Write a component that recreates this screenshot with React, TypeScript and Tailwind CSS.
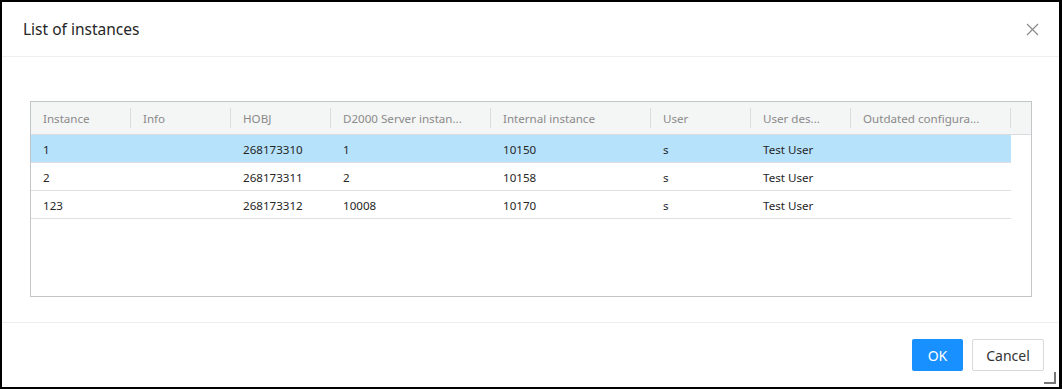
import React from "react";

const cols = [
  { name: "Instance", w: 100 },
  { name: "Info", w: 100 },
  { name: "HOBJ", w: 100 },
  { name: "D2000 Server instan...", w: 160 },
  { name: "Internal instance", w: 160 },
  { name: "User", w: 100 },
  { name: "User des...", w: 100 },
  { name: "Outdated configura...", w: 160 },
];

const rows = [
  ["1", "", "268173310", "1", "10150", "s", "Test User", ""],
  ["2", "", "268173311", "2", "10158", "s", "Test User", ""],
  ["123", "", "268173312", "10008", "10170", "s", "Test User", ""],
];

export default function App() {
  return (
    <div
      className="w-[1062px] h-[389px] bg-white border-black border-l-2 border-t-2 border-r-[3px] border-b-2 flex flex-col relative"
      style={{ fontFamily: '"Noto Sans", "Open Sans", sans-serif' }}
    >
      <div className="h-[55px] shrink-0 border-b border-[#eeeeee] flex items-center justify-between pl-[21px] pr-[20px]">
        <div className="text-[15.5px] text-[#262626] leading-none mt-[1px]">List of instances</div>
        <svg width="13" height="13" viewBox="0 0 13 13" className="text-[#8c8c8c] mt-[1px]">
          <path d="M1 1 L12 12 M12 1 L1 12" stroke="currentColor" strokeWidth="1.2" fill="none" />
        </svg>
      </div>
      <div className="flex-1 pt-[44px] pl-[28px] pr-[27px] pb-[25px] flex">
        <div className="flex-1 border border-[#c3c6c9] flex flex-col text-[11.6px]">
          <div className="h-[33px] bg-[#f4f5f5] border-b border-[#d9dcdf] flex items-center shrink-0">
            {cols.map((c) => (
              <div
                key={c.name}
                style={{ width: c.w }}
                className="h-[20px] shrink-0 flex items-center pt-[2px] pl-[12px] border-r border-[#dcdcdc] text-[#8a8a8a] whitespace-nowrap overflow-hidden"
              >
                {c.name}
              </div>
            ))}
          </div>
          {rows.map((r, i) => (
            <div key={i} className={`w-[980px] h-[28px] flex items-center pt-[2px] border-b border-[#e0e0e0] shrink-0 ${i === 0 ? "bg-[#b7e2fb]" : ""}`}>
              {r.map((v, j) => (
                <div key={j} style={{ width: cols[j].w }} className="shrink-0 pl-[12px] text-[#262626] whitespace-nowrap">
                  {v}
                </div>
              ))}
            </div>
          ))}
        </div>
      </div>
      <div className="h-[65px] shrink-0 border-t border-[#eeeeee] flex items-start justify-end gap-[9px] pt-[16px] pr-[15px]">
        <button className="w-[51px] h-[32px] bg-[#1890ff] text-white text-[14px] rounded-[2px]">OK</button>
        <button className="w-[72px] h-[32px] bg-white border border-[#d9d9d9] text-[#333] text-[14px] rounded-[2px]">Cancel</button>
      </div>
      <div className="absolute right-[3px] bottom-[3px] w-[12px] h-[12px] border-r-[2px] border-b-[2px] border-[#777777]" />
    </div>
  );
}
